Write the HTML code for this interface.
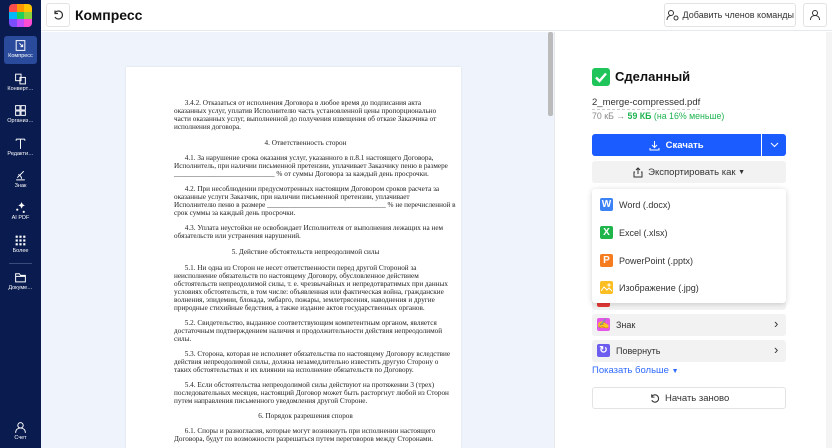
<!DOCTYPE html>
<html><head><meta charset="utf-8"><style>
*{margin:0;padding:0;box-sizing:border-box}
body{width:832px;height:448px;overflow:hidden;position:relative;font-family:"Liberation Sans","Noto Sans CJK SC",sans-serif;background:#fff;color:#222}
.abs{position:absolute}
#side{left:0;top:0;width:41px;height:448px;background:#0a1b4f}
.si{position:absolute;left:4px;width:33px;height:28px;color:#fff;font-size:5.5px;text-align:center;border-radius:3px;white-space:nowrap}
.si svg{display:block;margin:3px auto 1px;width:13px;height:13px}
#top{left:41px;top:0;width:791px;height:31px;background:#fff;border-bottom:1px solid #e6e9ef}
#doc{left:41px;top:32px;width:513px;height:416px;background:#eef3fc}
#paper{left:126px;top:67px;width:335px;height:381px;background:#fff;box-shadow:0 0 2px rgba(0,0,0,.1)}
.t{position:absolute;left:174px;width:270px;font-family:"Liberation Serif",serif;font-size:7.2px;line-height:8px;color:#222;white-space:nowrap}
.c{width:263px;text-align:center}
.btn{position:absolute;border-radius:3px;font-size:9.5px;display:flex;align-items:center;justify-content:center;white-space:nowrap}
.mi{position:absolute;left:600px;font-size:9px;color:#333;display:flex;align-items:center}
.ic{width:13px;height:13px;border-radius:2px;color:#fff;font-weight:bold;font-size:10px;display:flex;align-items:center;justify-content:center;margin-right:6px}
</style></head><body>
<div class="abs" id="side">
 <div class="abs" style="left:9px;top:4px;width:23px;height:23px;border-radius:4px;overflow:hidden;display:grid;grid-template-columns:repeat(3,1fr)">
  <i style="background:#ff4d4d"></i><i style="background:#ff9800"></i><i style="background:#ffc400"></i>
  <i style="background:#00b8ff"></i><i style="background:#1fd15a"></i><i style="background:#8bd33c"></i>
  <i style="background:#7a4dff"></i><i style="background:#c04dff"></i><i style="background:#ff4dd2"></i>
 </div>
 <div class="si" style="top:36px;background:#2a4a9c"><svg viewBox="0 0 12 12" fill="none" stroke="#fff" stroke-width="0.9"><rect x="2" y="1.5" width="8" height="9"/><path d="M5 4l3 3M8 5v2H6"/></svg>Компресс</div>
 <div class="si" style="top:69px"><svg viewBox="0 0 12 12" fill="none" stroke="#fff" stroke-width="0.9"><rect x="1.5" y="2" width="5" height="6"/><rect x="5.5" y="5" width="5" height="6"/></svg>Конверт…</div>
 <div class="si" style="top:101px"><svg viewBox="0 0 12 12" fill="none" stroke="#fff" stroke-width="0.9"><rect x="1.5" y="1.5" width="4" height="4"/><rect x="6.5" y="1.5" width="4" height="4"/><rect x="1.5" y="6.5" width="4" height="4"/><rect x="6.5" y="6.5" width="4" height="4"/></svg>Организ…</div>
 <div class="si" style="top:134px"><svg viewBox="0 0 12 12" fill="none" stroke="#fff" stroke-width="0.9"><path d="M2 2h8M6 2v9M2 2v1.5M10 2v1.5"/></svg>Редакти…</div>
 <div class="si" style="top:166px"><svg viewBox="0 0 12 12" fill="none" stroke="#fff" stroke-width="0.9"><path d="M2 10h8M3 8l6-6M4 5c2 1 3 2 3 4"/></svg>Знак</div>
 <div class="si" style="top:198px"><svg viewBox="0 0 12 12" fill="#fff"><path d="M7 1l1 2 2 1-2 1-1 2-1-2-2-1 2-1z"/><circle cx="3" cy="8" r="1"/><circle cx="9" cy="10" r="1"/></svg>AI PDF</div>
 <div class="si" style="top:231px"><svg viewBox="0 0 12 12" fill="#fff"><rect x="1.5" y="1.5" width="2" height="2"/><rect x="5" y="1.5" width="2" height="2"/><rect x="8.5" y="1.5" width="2" height="2"/><rect x="1.5" y="5" width="2" height="2"/><rect x="5" y="5" width="2" height="2"/><rect x="8.5" y="5" width="2" height="2"/><rect x="1.5" y="8.5" width="2" height="2"/><rect x="5" y="8.5" width="2" height="2"/><rect x="8.5" y="8.5" width="2" height="2"/></svg>Более</div>
 <div class="abs" style="left:9px;top:263px;width:23px;height:1px;background:#3a4a7a"></div>
 <div class="si" style="top:268px"><svg viewBox="0 0 12 12" fill="none" stroke="#fff" stroke-width="0.9"><path d="M1.5 2.5h3.5l1 1.5h4.5v6h-9z M1.5 5h9"/></svg>Докуме…</div>
 <div class="si" style="top:418px"><svg viewBox="0 0 12 12" fill="none" stroke="#fff" stroke-width="0.9"><circle cx="6" cy="4" r="2.5"/><path d="M1.5 11c0-3 2-4.5 4.5-4.5s4.5 1.5 4.5 4.5"/></svg>Счет</div>
</div>
<div class="abs" id="top">
 <div class="btn" style="left:5px;top:3px;width:24px;height:24px;border:1px solid #e3e3e3"><svg width="12" height="12" viewBox="0 0 12 12" fill="none" stroke="#333" stroke-width="1.2"><path d="M3 4a4 4 0 1 1 0 4"/><path d="M3 1.5v3h3" /></svg></div>
 <div class="abs" style="left:34px;top:7px;font-size:14px;font-weight:bold;color:#111">Компресс</div>
 <div class="btn" style="left:623px;top:3px;width:132px;height:24px;border:1px solid #e3e3e3;color:#333;font-size:9px"><svg width="14" height="12" viewBox="0 0 14 12" fill="none" stroke="#333" stroke-width="1"><circle cx="5" cy="4" r="2.5"/><path d="M1 11c0-3 2-4.5 4-4.5"/><circle cx="10" cy="9" r="2"/></svg>&nbsp;Добавить членов команды</div>
 <div class="btn" style="left:762px;top:3px;width:24px;height:24px;border:1px solid #e3e3e3"><svg width="12" height="12" viewBox="0 0 12 12" fill="none" stroke="#333" stroke-width="1"><circle cx="6" cy="4" r="2.5"/><path d="M1.5 11c0-3 2-4.5 4.5-4.5s4.5 1.5 4.5 4.5"/></svg></div>
</div>
<div class="abs" id="doc"></div>
<div class="abs" style="left:548px;top:32px;width:5px;height:84px;background:#bbb;border-radius:2px"></div>
<div class="abs" style="left:554px;top:32px;width:1px;height:416px;background:#e8e8e8"></div>
<div class="abs" id="paper"></div>
<div class="t" style="top:99px">&nbsp;&nbsp;&nbsp;&nbsp;&nbsp;&nbsp;3.4.2. Отказаться от исполнения Договора в любое время до подписания акта<br>оказанных услуг, уплатив Исполнителю часть установленной цены пропорционально<br>части оказанных услуг, выполненной до получения извещения об отказе Заказчика от<br>исполнения договора.</div>
<div class="t c" style="top:139px">4. Ответственность сторон</div>
<div class="t" style="top:154px">&nbsp;&nbsp;&nbsp;&nbsp;&nbsp;&nbsp;4.1. За нарушение срока оказания услуг, указанного в п.8.1 настоящего Договора,<br>Исполнитель, при наличии письменной претензии, уплачивает Заказчику пеню в размере<br>____________________________ % от суммы Договора за каждый день просрочки.</div>
<div class="t" style="top:185px">&nbsp;&nbsp;&nbsp;&nbsp;&nbsp;&nbsp;4.2. При несоблюдении предусмотренных настоящим Договором сроков расчета за<br>оказанные услуги Заказчик, при наличии письменной претензии, уплачивает<br>Исполнителю пеню в размере _________________________________ % не перечисленной в<br>срок суммы за каждый день просрочки.</div>
<div class="t" style="top:224px">&nbsp;&nbsp;&nbsp;&nbsp;&nbsp;&nbsp;4.3. Уплата неустойки не освобождает Исполнителя от выполнения лежащих на нем<br>обязательств или устранения нарушений.</div>
<div class="t c" style="top:248px">5. Действие обстоятельств непреодолимой силы</div>
<div class="t" style="top:264px">&nbsp;&nbsp;&nbsp;&nbsp;&nbsp;&nbsp;5.1. Ни одна из Сторон не несет ответственности перед другой Стороной за<br>неисполнение обязательств по настоящему Договору, обусловленное действием<br>обстоятельств непреодолимой силы, т. е. чрезвычайных и непредотвратимых при данных<br>условиях обстоятельств, в том числе: объявленная или фактическая война, гражданские<br>волнения, эпидемии, блокада, эмбарго, пожары, землетрясения, наводнения и другие<br>природные стихийные бедствия, а также издание актов государственных органов.</div>
<div class="t" style="top:319px">&nbsp;&nbsp;&nbsp;&nbsp;&nbsp;&nbsp;5.2. Свидетельство, выданное соответствующим компетентным органом, является<br>достаточным подтверждением наличия и продолжительности действия непреодолимой<br>силы.</div>
<div class="t" style="top:350px">&nbsp;&nbsp;&nbsp;&nbsp;&nbsp;&nbsp;5.3. Сторона, которая не исполняет обязательства по настоящему Договору вследствие<br>действия непреодолимой силы, должна незамедлительно известить другую Сторону о<br>таких обстоятельствах и их влиянии на исполнение обязательств по Договору.</div>
<div class="t" style="top:381px">&nbsp;&nbsp;&nbsp;&nbsp;&nbsp;&nbsp;5.4. Если обстоятельства непреодолимой силы действуют на протяжении 3 (трех)<br>последовательных месяцев, настоящий Договор может быть расторгнут любой из Сторон<br>путем направления письменного уведомления другой Стороне.</div>
<div class="t c" style="top:412px">6. Порядок разрешения споров</div>
<div class="t" style="top:427px">&nbsp;&nbsp;&nbsp;&nbsp;&nbsp;&nbsp;6.1. Споры и разногласия, которые могут возникнуть при исполнении настоящего<br>Договора, будут по возможности разрешаться путем переговоров между Сторонами.</div>

<div class="abs" id="right"></div>
<div class="abs" style="left:826px;top:32px;width:6px;height:416px;background:#f4f4f4"></div>
<div class="abs" style="left:592px;top:68px;width:18px;height:18px;background:#1fc55a;border-radius:3px"><svg width="18" height="18" viewBox="0 0 18 18" fill="none" stroke="#fff" stroke-width="2.4"><path d="M4 9.5l3.5 3.5 6.5-7.5"/></svg></div>
<div class="abs" style="left:615px;top:69px;font-size:13px;font-weight:bold;color:#111">Сделанный</div>
<div class="abs" style="left:592px;top:97px;font-size:9.5px;color:#333;border-bottom:1px dashed #ccc;padding-bottom:1px">2_merge-compressed.pdf</div>
<div class="abs" style="left:592px;top:111px;font-size:8.8px;color:#888">70 кБ → <b style="color:#1fb450">59 КБ</b> <span style="color:#1fb450">(на 16% меньше)</span></div>
<div class="btn" style="left:592px;top:134px;width:169px;height:22px;background:#1a5cff;color:#fff;font-weight:bold;border-radius:3px 0 0 3px"><svg width="11" height="11" viewBox="0 0 11 11" fill="none" stroke="#fff" stroke-width="1"><path d="M5.5 1v6M3 5l2.5 2.5L8 5M1 8v2h9V8"/></svg>&nbsp;&nbsp;Скачать</div>
<div class="btn" style="left:762px;top:134px;width:24px;height:22px;background:#1a5cff;border-radius:0 3px 3px 0"><svg width="9" height="6" viewBox="0 0 9 6" fill="none" stroke="#fff" stroke-width="1"><path d="M1 1l3.5 3.5L8 1"/></svg></div>
<div class="btn" style="left:592px;top:161px;width:194px;height:22px;background:#f2f2f2;color:#333"><svg width="10" height="11" viewBox="0 0 10 11" fill="none" stroke="#333" stroke-width="1"><path d="M5 1v6M3 3l2-2 2 2M2 5H1v5h8V5H8"/></svg>&nbsp;&nbsp;Экспортировать как&nbsp;<span style="font-size:7px">▼</span></div>
<div class="abs" style="left:592px;top:291px;width:194px;height:19px;background:#f2f2f2;border-radius:3px"><div style="margin:3px 0 0 5px;width:13px;height:13px;background:#e53935;border-radius:2px"></div></div>
<div class="abs" style="left:592px;top:314px;width:194px;height:22px;background:#f2f2f2;border-radius:3px"></div>
<div class="abs" style="left:592px;top:340px;width:194px;height:22px;background:#f2f2f2;border-radius:3px"></div>
<div class="mi" style="left:597px;top:318px"><div class="ic" style="background:#e455e8">✍</div>Знак</div>
<div class="mi" style="left:597px;top:344px"><div class="ic" style="background:#6c5cf0">↻</div>Повернуть</div>
<div class="abs" style="left:774px;top:316px;font-size:13px;color:#333">›</div>
<div class="abs" style="left:774px;top:342px;font-size:13px;color:#333">›</div>
<div class="abs" style="left:592px;top:365px;font-size:9.5px;color:#2f6bff">Показать больше <span style="font-size:7px">▼</span></div>
<div class="btn" style="left:592px;top:387px;width:194px;height:22px;border:1px solid #e3e3e3;color:#333"><svg width="11" height="11" viewBox="0 0 12 12" fill="none" stroke="#333" stroke-width="1.2"><path d="M3 4a4 4 0 1 1 0 4"/><path d="M3 1.5v3h3"/></svg>&nbsp;&nbsp;Начать заново</div>

<div class="abs" style="left:592px;top:189px;width:194px;height:114px;background:#fff;border-radius:3px;box-shadow:0 1px 6px rgba(0,0,0,.18)"></div>
<div class="mi" style="top:198px"><div class="ic" style="background:#3b82f6">W</div>Word (.docx)</div>
<div class="mi" style="top:226px"><div class="ic" style="background:#1fb54a">X</div>Excel (.xlsx)</div>
<div class="mi" style="top:254px"><div class="ic" style="background:#f57c1f">P</div>PowerPoint (.pptx)</div>
<div class="mi" style="top:281px"><div class="ic" style="background:#fbbf24"><svg width="11" height="9" viewBox="0 0 11 9" fill="none" stroke="#fff" stroke-width="1"><path d="M0 8l3-4 3 3 2-2 3 3"/><circle cx="8" cy="2" r="1"/></svg></div>Изображение (.jpg)</div>
</body></html>
